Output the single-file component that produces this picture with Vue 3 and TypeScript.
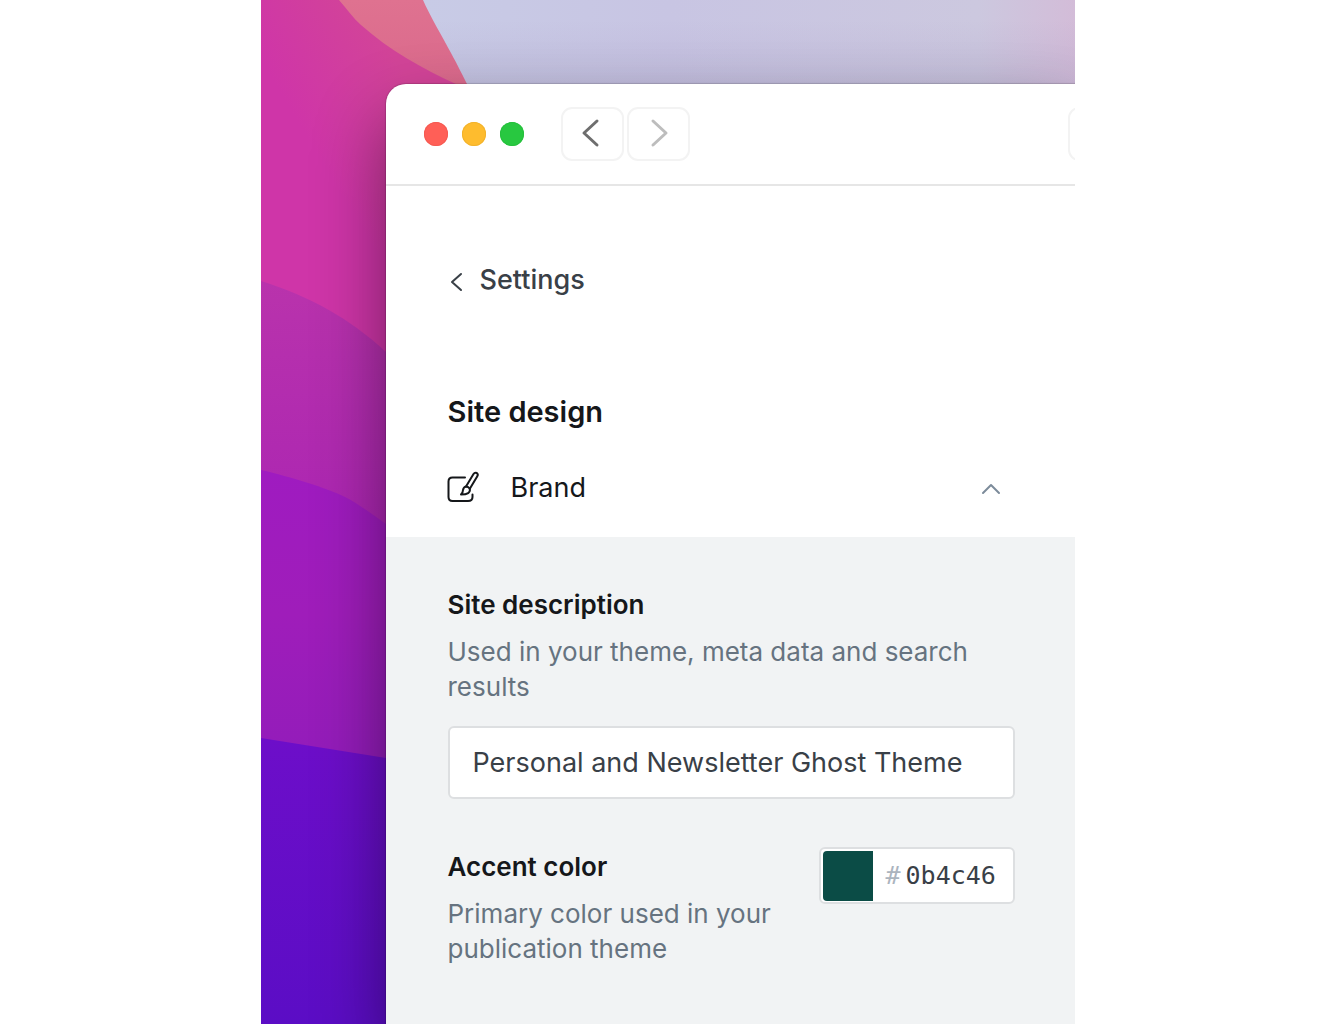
<script setup lang="ts">
import { ref } from 'vue'

const description = ref('Personal and Newsletter Ghost Theme')
const accent = ref('0b4c46')
const expanded = ref(true)
const lights = ['close', 'minimize', 'zoom']
</script>

<template>
  <main class="stage">
    <svg class="wallpaper" viewBox="0 0 815 1024" preserveAspectRatio="xMinYMin slice" aria-hidden="true">
      <defs>
        <linearGradient id="sky" x1="0" y1="0" x2="1" y2="0">
          <stop offset="0.2" stop-color="#c8cbe6" />
          <stop offset="0.5" stop-color="#c8c5e3" />
          <stop offset="0.88" stop-color="#ccc8df" />
          <stop offset="1" stop-color="#d3bcd8" />
        </linearGradient>
        <linearGradient id="dusk" x1="0" y1="20" x2="0" y2="84" gradientUnits="userSpaceOnUse">
          <stop offset="0" stop-color="#a89cc4" stop-opacity="0" />
          <stop offset="1" stop-color="#a89cc4" stop-opacity="0.25" />
        </linearGradient>
        <linearGradient id="coral" x1="0" y1="0" x2="0" y2="84" gradientUnits="userSpaceOnUse">
          <stop offset="0" stop-color="#df7290" />
          <stop offset="1" stop-color="#da698c" />
        </linearGradient>
        <linearGradient id="magenta" x1="130" y1="50" x2="30" y2="110" gradientUnits="userSpaceOnUse">
          <stop offset="0" stop-color="#d24498" />
          <stop offset="1" stop-color="#cf35a8" />
        </linearGradient>
        <linearGradient id="orchid" x1="0" y1="281" x2="0" y2="520" gradientUnits="userSpaceOnUse">
          <stop offset="0" stop-color="#b933ac" />
          <stop offset="1" stop-color="#ac26b2" />
        </linearGradient>
        <linearGradient id="violet" x1="0" y1="470" x2="0" y2="758" gradientUnits="userSpaceOnUse">
          <stop offset="0" stop-color="#9f1bc0" />
          <stop offset="0.5" stop-color="#9f1dba" />
          <stop offset="1" stop-color="#931cba" />
        </linearGradient>
        <linearGradient id="indigo" x1="0" y1="738" x2="0" y2="1024" gradientUnits="userSpaceOnUse">
          <stop offset="0" stop-color="#6d0ec9" />
          <stop offset="1" stop-color="#5b0dc5" />
        </linearGradient>
      </defs>
      <rect width="815" height="1024" fill="url(#sky)" />
      <rect width="815" height="1024" fill="url(#dusk)" />
      <path d="M0 0H162C168 14 182 38 190 53C196 64 202 76 206 84L260 200H0Z" fill="url(#coral)" />
      <path d="M0 0H78C86 9 92 18 100 25C128 50 162 69 195 84L300 130V500H0Z" fill="url(#magenta)" />
      <path d="M0 281C50 297 88 318 125 352L300 520V700H0Z" fill="url(#orchid)" />
      <path d="M0 470C30 477 66 488 84 497C98 504 112 515 125 524L300 640V800H0Z" fill="url(#violet)" />
      <path d="M0 738L125 758L815 868V1024H0Z" fill="url(#indigo)" />
    </svg>

    <section class="window">
      <header class="titlebar">
        <div class="lights">
          <button v-for="name in lights" :key="name" type="button" class="light" :class="name" :aria-label="name"></button>
        </div>
        <nav class="history" aria-label="History">
          <button type="button" class="nav" aria-label="Back">
            <svg width="20" height="30" viewBox="0 0 20 30"><path d="M15 2L2 14L15 26" /></svg>
          </button>
          <button type="button" class="nav forward" aria-label="Forward">
            <svg width="20" height="30" viewBox="0 0 20 30"><path d="M5 2L18 14L5 26" /></svg>
          </button>
        </nav>
        <div class="address"></div>
      </header>

      <div class="menu">
        <a class="back" href="#settings">
          <svg width="16" height="20" viewBox="0 0 16 20"><path d="M13 4L4 12L13 20" /></svg>
          <span>Settings</span>
        </a>
        <h1>Site design</h1>
        <button type="button" class="brand" :aria-expanded="expanded" @click="expanded = !expanded">
          <svg class="brush" width="32" height="32" viewBox="0 0 32 32">
            <path d="M17 5.500H4.500Q0.500 5.500 0.500 9.500V25Q0.500 29 4.500 29H20Q24.500 29 24.500 25V22.500" />
            <path d="M18 14.500L25.500 2Q26.800 0 28.800 1Q30.500 2.200 29.300 4.300L21.800 16.800" />
            <path d="M18 14.500Q20.500 14.500 21.800 16.800Q23 22.500 13 22.500Q15 20.500 15 18Q15.500 15 18 14.500Z" />
          </svg>
          <span>Brand</span>
          <svg class="chevron" width="20" height="14" viewBox="0 0 20 14"><path d="M2 12L10 4L18 12" /></svg>
        </button>
      </div>

      <form v-if="expanded" class="panel" @submit.prevent>
        <div class="field">
          <label for="description">Site description</label>
          <p>Used in your theme, meta data and search results</p>
          <input id="description" v-model="description" class="text" type="text" />
        </div>
        <div class="row">
          <div class="field">
            <label for="accent">Accent color</label>
            <p>Primary color used in your publication theme</p>
          </div>
          <div class="color">
            <span class="swatch" :style="{ background: '#' + accent }"></span>
            <span class="hash">#</span>
            <input id="accent" v-model="accent" type="text" maxlength="6" />
          </div>
        </div>
      </form>
    </section>
  </main>
</template>

<style>
body {
  margin: 0;
  background: #fff;
}
</style>

<style scoped>
* {
  box-sizing: border-box;
}

.stage {
  position: relative;
  display: flex;
  width: 61%;
  min-height: 100vh;
  margin: 0 auto;
  padding: 84px 0 0 125px;
  overflow: hidden;
  font-family: Inter, "Liberation Sans", sans-serif;
  font-variant-ligatures: none;
  color: #15171a;
}

.wallpaper {
  position: absolute;
  inset: 0;
  width: 100%;
  height: 100%;
}

svg {
  overflow: visible;
}

svg path {
  stroke-linecap: round;
  stroke-linejoin: round;
}

button,
input {
  font: inherit;
  color: inherit;
}

button {
  padding: 0;
  border: 0;
  background: none;
}

.window {
  position: relative;
  display: flex;
  flex: 1;
  flex-direction: column;
  min-width: 0;
  background: #fff;
  border-top-left-radius: 20px;
  box-shadow: 0 0 1px 1px rgba(0, 0, 0, 0.15), 0 36px 70px rgba(0, 0, 0, 0.45);
}

.titlebar {
  display: flex;
  align-items: center;
  height: 102px;
  padding-left: 38px;
  border-bottom: 2px solid #e6e6e6;
  overflow: hidden;
}

.lights {
  display: flex;
  gap: 14px;
}

.light {
  width: 24px;
  height: 24px;
  border-radius: 50%;
}

.close {
  background: #ff5f57;
  box-shadow: inset 0 0 0 1px #f55b53;
}

.minimize {
  background: #febc2e;
  box-shadow: inset 0 0 0 1px #f2b32d;
}

.zoom {
  background: #28c840;
  box-shadow: inset 0 0 0 1px #27c03d;
}

.history {
  display: flex;
  gap: 3px;
  margin-left: 37px;
}

.nav {
  display: flex;
  align-items: center;
  justify-content: center;
  width: 63px;
  height: 54px;
  border: 2px solid #f3f3f3;
  border-radius: 11px;
}

.nav path {
  fill: none;
  stroke: #6e6e6e;
  stroke-width: 3;
}

.forward path {
  stroke: #bdbdbd;
}

.address {
  width: 62px;
  height: 54px;
  margin: 0 -55px 0 auto;
  border: 2px solid #f3f3f3;
  border-radius: 11px;
}

.menu {
  padding: 74px 60px 29px 62px;
}

.back {
  display: flex;
  align-items: center;
  gap: 16px;
  width: max-content;
  color: #394047;
  font-size: 27px;
  font-weight: 500;
  line-height: 40px;
  text-decoration: none;
}

.back path,
.chevron path {
  fill: none;
  stroke: #394047;
  stroke-width: 2;
}

h1 {
  margin: 92px 0 0;
  font-size: 29px;
  font-weight: 600;
  line-height: 40px;
}

.brand {
  display: flex;
  align-items: center;
  width: 100%;
  margin-top: 36px;
  padding-right: 14px;
  font-size: 27px;
  line-height: 40px;
  text-align: left;
}

.brand span {
  flex: 1;
  margin-left: 31px;
}

.brush path {
  fill: none;
  stroke: #15171a;
  stroke-width: 2;
}

.chevron path {
  stroke: #7c8b9a;
}

.panel {
  flex: 1;
  padding: 50px 60px 50px 62px;
  background: #f1f3f4;
}

.field label {
  display: block;
  font-size: 26px;
  font-weight: 600;
  line-height: 36px;
}

.field p {
  margin: 11px 0 0;
  color: #667380;
  font-size: 26px;
  line-height: 35px;
}

.text {
  display: block;
  width: 100%;
  height: 73px;
  margin-top: 22px;
  padding: 0 23px;
  border: 2px solid #dddfe1;
  border-radius: 6px;
  background: #fff;
  color: #394047;
  font-size: 27px;
}

.row {
  display: flex;
  justify-content: space-between;
  align-items: flex-start;
  gap: 24px;
  margin-top: 48px;
}

.row .field {
  flex: 1;
  padding-top: 2px;
}

.color {
  display: flex;
  align-items: center;
  width: 196px;
  height: 57px;
  padding: 2px;
  border: 2px solid #dddfe1;
  border-radius: 6px;
  background: #fff;
  color: #394047;
  font-family: "DejaVu Sans Mono", monospace;
  font-size: 25px;
}

.swatch {
  width: 50px;
  height: 50px;
  border-radius: 4px 0 0 4px;
}

.hash {
  margin-left: 12px;
  color: #abb4be;
}

.color input {
  flex: 1;
  min-width: 0;
  padding: 0 0 0 5px;
  border: 0;
  background: none;
}

input:focus {
  outline: none;
}
</style>
